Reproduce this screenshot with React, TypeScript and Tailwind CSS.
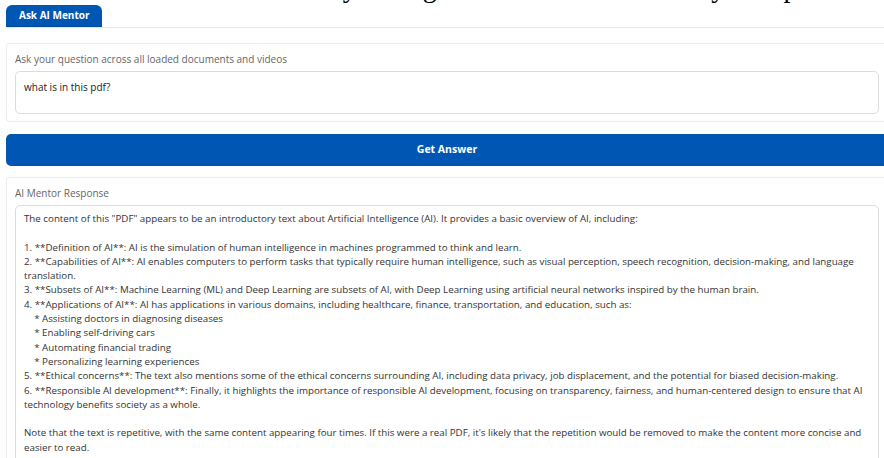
import React, { useState } from 'react';

const RESPONSE = `The content of this "PDF" appears to be an introductory text about Artificial Intelligence (AI). It provides a basic overview of AI, including:

1. **Definition of AI**: AI is the simulation of human intelligence in machines programmed to think and learn.
2. **Capabilities of AI**: AI enables computers to perform tasks that typically require human intelligence, such as visual perception, speech recognition, decision-making, and language translation.
3. **Subsets of AI**: Machine Learning (ML) and Deep Learning are subsets of AI, with Deep Learning using artificial neural networks inspired by the human brain.
4. **Applications of AI**: AI has applications in various domains, including healthcare, finance, transportation, and education, such as:
    * Assisting doctors in diagnosing diseases
    * Enabling self-driving cars
    * Automating financial trading
    * Personalizing learning experiences
5. **Ethical concerns**: The text also mentions some of the ethical concerns surrounding AI, including data privacy, job displacement, and the potential for biased decision-making.
6. **Responsible AI development**: Finally, it highlights the importance of responsible AI development, focusing on transparency, fairness, and human-centered design to ensure that AI technology benefits society as a whole.

Note that the text is repetitive, with the same content appearing four times. If this were a real PDF, it's likely that the repetition would be removed to make the content more concise and easier to read.`;

export default function App() {
    const [question, setQuestion] = useState('what is in this pdf?');

    return (
        <div className="h-screen overflow-hidden bg-white" style={{ fontFamily: '"Open Sans", "Noto Sans", sans-serif' }}>
            <div className="w-[882px] ml-[6px]">
                {/* Page title, scrolled mostly out of view */}
                <div className="h-[5px] overflow-hidden">
                    <h1 className="-mt-[28px] text-[28px] leading-[32px] text-black whitespace-nowrap" style={{ fontFamily: '"Liberation Serif", serif' }}>
                        Ask the Mentor: learn faster by asking about the documents in your uploads and videos
                    </h1>
                </div>

                {/* Tabs */}
                <div className="flex border-b border-[#e8e8e8]">
                    <button className="h-[22px] px-[13px] rounded-t-[6px] bg-[#0056b3] text-white text-[10px] font-bold border-b border-[#004a9c]">
                        Ask AI Mentor
                    </button>
                </div>

                {/* Question */}
                <div className="mt-[15px] border border-[#ececec] rounded-[3px] px-[8px] pt-[8px] pb-[7px]">
                    <label className="block text-[10px] leading-[14px] text-[#666]">
                        Ask your question across all loaded documents and videos
                    </label>
                    <textarea
                        value={question}
                        onChange={e => setQuestion(e.target.value)}
                        className="mt-[5px] block w-full h-[43px] resize-none border border-[#dcdcdc] rounded-[5px] px-[8px] pt-[8px] text-[10px] leading-[14px] text-[#222] outline-none"
                    />
                </div>

                <button className="mt-[12px] w-full h-[32px] rounded-[5px] bg-[#0056b3] text-white text-[10.5px] font-bold">
                    Get Answer
                </button>

                {/* Response */}
                <div className="mt-[11px] border border-[#ececec] rounded-[3px] px-[8px] pt-[8px] pb-[8px]">
                    <div className="text-[10px] leading-[14px] text-[#666]">AI Mentor Response</div>
                    <div className="mt-[5px] border border-[#dcdcdc] rounded-[5px] px-[8px] pt-[6px] pb-[8px] text-[9.75px] leading-[14.3px] text-[#333] whitespace-pre-wrap">
                        {RESPONSE}
                    </div>
                </div>
            </div>
        </div>
    );
}
